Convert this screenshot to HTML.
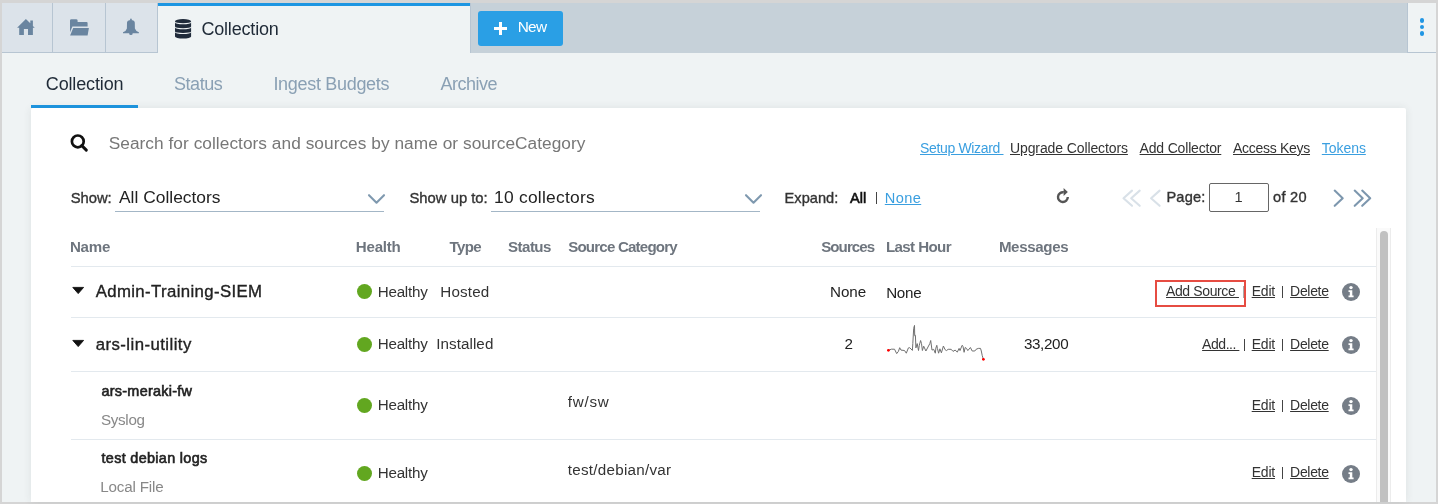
<!DOCTYPE html>
<html><head><meta charset="utf-8"><title>Collection</title>
<style>
html,body{margin:0;padding:0;}
body{width:1438px;height:504px;position:relative;overflow:hidden;background:#d5d5d5;font-family:"Liberation Sans", sans-serif;}
.t{position:absolute;white-space:pre;line-height:1;}
svg{display:block}
</style></head><body>
<div style="position:absolute;left:2px;top:3px;width:1434px;height:50px;background:#c6d1d9"></div>
<div style="position:absolute;left:2px;top:3px;width:155px;height:49px;background:#dce3ea"></div>
<div style="position:absolute;left:52px;top:3px;width:1px;height:49px;background:#b7c5d2"></div>
<div style="position:absolute;left:105px;top:3px;width:1px;height:49px;background:#b7c5d2"></div>
<div style="position:absolute;left:157px;top:3px;width:1px;height:50px;background:#b7c5d2"></div>
<div style="position:absolute;left:2px;top:52px;width:156px;height:1px;background:#b7c5d2"></div>
<div style="position:absolute;left:158px;top:3px;width:312px;height:50px;background:#eff3f4"></div>
<div style="position:absolute;left:158px;top:3px;width:312px;height:3px;background:#1d96e2"></div>
<div style="position:absolute;left:470px;top:3px;width:1px;height:50px;background:#b7c5d2"></div>
<div style="position:absolute;left:1407px;top:3px;width:29px;height:49px;background:#eff3f4"></div>
<div style="position:absolute;left:1407px;top:3px;width:1px;height:50px;background:#b7c5d2"></div>
<div style="position:absolute;left:1408px;top:52px;width:28px;height:1px;background:#b7c5d2"></div>
<div style="position:absolute;left:1419.6px;top:18.1px;width:4.8px;height:4.8px;border-radius:50%;background:#2196e3"></div>
<div style="position:absolute;left:1419.6px;top:24.6px;width:4.8px;height:4.8px;border-radius:50%;background:#2196e3"></div>
<div style="position:absolute;left:1419.6px;top:31.1px;width:4.8px;height:4.8px;border-radius:50%;background:#2196e3"></div>
<svg style="position:absolute;left:17px;top:18px" width="18" height="18" viewBox="0 0 18 18"><path fill="#6a85a0" d="M8.9 0.9 L13.3 5.3 L13.3 2.4 L15.9 2.4 L15.9 7.9 L17.8 9.7 L15.9 9.7 L15.9 16.9 L11 16.9 L11 10.9 L6.9 10.9 L6.9 16.9 L2.2 16.9 L2.2 9.7 L0.1 9.7 Z"/></svg>
<svg style="position:absolute;left:70px;top:19px" width="19" height="17" viewBox="0 0 19 17"><path fill="#6a85a0" d="M0 1.6 Q0 0.2 1.4 0.2 L6.2 0.2 Q7.5 0.2 7.6 1.4 L7.6 3 L16.6 3 Q17.6 3 17.6 4 L17.6 7.4 L2.4 7.4 L0 13.2 Z M3.2 8.9 L18.9 8.9 L17.6 16.4 L0.1 16.4 Z"/></svg>
<svg style="position:absolute;left:123px;top:18px" width="16" height="18" viewBox="0 0 16 18"><path fill="#6a85a0" d="M4 4.5 Q4.2 2.6 6.2 2.3 L9.6 2.3 Q11.6 2.6 11.8 4.5 L11.9 10.5 Q12.5 12.8 15.9 14.3 L15.9 15.3 L0 15.3 L0 14.3 Q3.4 12.8 3.9 10.5 Z M7.1 2.6 L7.1 1.2 Q7.1 0.4 7.95 0.4 Q8.8 0.4 8.8 1.2 L8.8 2.6 Z M6.1 15.2 L9.7 15.2 Q9.7 17.1 7.9 17.1 Q6.1 17.1 6.1 15.2 Z"/></svg>
<svg style="position:absolute;left:175px;top:19px" width="17" height="20" viewBox="0 0 17 20"><g fill="#1f2a3a"><path d="M0 2.2 A8.05 2.2 0 0 1 16.1 2.2 L16.1 2.6 A8.05 1.7 0 0 1 0 2.6 Z"/><path d="M0 3.5 A8.05 1.7 0 0 0 16.1 3.5 L16.1 7.6 A8.05 1.7 0 0 1 0 7.6 Z"/><path d="M0 8.5 A8.05 1.7 0 0 0 16.1 8.5 L16.1 12.4 A8.05 1.7 0 0 1 0 12.4 Z"/><path d="M0 13.2 A8.05 1.7 0 0 0 16.1 13.2 L16.1 17.6 A8.05 2 0 0 1 0 17.6 Z"/></g></svg>
<div style="position:absolute;left:478px;top:11px;width:85px;height:35px;background:#2a9fe5;border-radius:3px"></div>
<div style="position:absolute;left:494px;top:27.3px;width:13px;height:2.6px;background:#fff"></div>
<div style="position:absolute;left:499.2px;top:22px;width:2.6px;height:13px;background:#fff"></div>
<div style="position:absolute;left:2px;top:53px;width:1434px;height:449px;background:#eff3f4"></div>
<div style="position:absolute;left:31px;top:105px;width:107px;height:3px;background:#1d96e2"></div>
<div style="position:absolute;left:31px;top:108px;width:1375px;height:394px;background:#fff;box-shadow:0 0 8px rgba(40,50,60,0.09);border-radius:2px 2px 0 0"></div>
<svg style="position:absolute;left:70px;top:134px" width="18" height="18" viewBox="0 0 18 18"><circle cx="7.8" cy="7.4" r="5.9" fill="none" stroke="#111" stroke-width="2.7"/><path d="M11.8 11.6 L16.3 16.1" stroke="#111" stroke-width="2.9" stroke-linecap="round"/></svg>
<div style="position:absolute;left:115px;top:211px;width:269px;height:1px;background:#a3b6c6"></div>
<svg style="position:absolute;left:367px;top:193px" width="19" height="12" viewBox="0 0 19 12"><path d="M2 2.2 L9.5 9.7 L17 2.2" fill="none" stroke="#7f99af" stroke-width="2.1" stroke-linecap="round" stroke-linejoin="round"/></svg>
<div style="position:absolute;left:491px;top:211px;width:269px;height:1px;background:#a3b6c6"></div>
<svg style="position:absolute;left:743.5px;top:193px" width="19" height="12" viewBox="0 0 19 12"><path d="M2 2.2 L9.5 9.7 L17 2.2" fill="none" stroke="#7f99af" stroke-width="2.1" stroke-linecap="round" stroke-linejoin="round"/></svg>
<div style="position:absolute;left:876px;top:192px;width:1px;height:12px;background:#444"></div>
<svg style="position:absolute;left:1056px;top:188px" width="15" height="16" viewBox="0 0 15 16"><path d="M11.8 9.1 A4.9 4.9 0 1 1 7.75 4.27" fill="none" stroke="#555" stroke-width="2.4"/><path d="M7.6 0.1 L11.8 4.1 L7.6 8 Z" fill="#555"/></svg>
<svg style="position:absolute;left:1118px;top:184px" width="48" height="28" viewBox="0 0 48 28"><g fill="none" stroke="#d9e1e8" stroke-width="2.1" stroke-linecap="round" stroke-linejoin="round"><path d="M14 6.6 L5.5 14.2 L14 21.8"/><path d="M21.7 6.6 L13.2 14.2 L21.7 21.8"/><path d="M41.6 6.6 L33.1 14.2 L41.6 21.8"/></g></svg>
<div style="position:absolute;left:1209px;top:183px;width:60px;height:29px;box-sizing:border-box;border:1px solid #666;border-radius:2px;background:#fff"></div>
<svg style="position:absolute;left:1328px;top:184px" width="48" height="28" viewBox="0 0 48 28"><g fill="none" stroke="#7d97ae" stroke-width="2.1" stroke-linecap="round" stroke-linejoin="round"><path d="M6.7 6.6 L14.7 14.2 L6.7 21.8"/><path d="M26.7 6.6 L34.7 14.2 L26.7 21.8"/><path d="M34.2 6.6 L42.2 14.2 L34.2 21.8"/></g></svg>
<div style="position:absolute;left:71px;top:266px;width:1305px;height:1px;background:#e3e9ee"></div>
<div style="position:absolute;left:71px;top:317px;width:1305px;height:1px;background:#e3e9ee"></div>
<div style="position:absolute;left:71px;top:371px;width:1305px;height:1px;background:#e3e9ee"></div>
<div style="position:absolute;left:71px;top:439px;width:1305px;height:1px;background:#e3e9ee"></div>
<div style="position:absolute;left:1376px;top:228px;width:15px;height:274px;box-sizing:border-box;border-left:1px solid #ececec;border-right:1px solid #ececec;background:#fafafa"></div>
<div style="position:absolute;left:1380px;top:231px;width:8px;height:271px;background:#c1c1c1;border-radius:4px 4px 0 0"></div>
<svg style="position:absolute;left:72px;top:286px" width="13" height="9" viewBox="0 0 13 9"><path d="M0.8 1.4 L11.6 1.4 L6.2 7.6 Z" fill="#111" stroke="#111" stroke-width="0.9" stroke-linejoin="round"/></svg>
<div style="position:absolute;left:357px;top:284.0px;width:15px;height:15px;border-radius:50%;background:#62a720"></div>
<div style="position:absolute;left:1155px;top:280px;width:91px;height:27px;box-sizing:border-box;border:2px solid #e64c42"></div>
<div style="position:absolute;left:1243px;top:286px;width:1px;height:12px;background:#aaa"></div>
<div style="position:absolute;left:1282px;top:286px;width:1px;height:12px;background:#444"></div>
<svg style="position:absolute;left:1342px;top:283px" width="18" height="18" viewBox="0 0 18 18"><circle cx="9" cy="9" r="9" fill="#757d87"/><circle cx="9" cy="4.6" r="1.7" fill="#fff"/><path d="M6.5 7.3 L10.3 7.3 L10.3 12.5 L11.6 12.5 L11.6 14.2 L6.5 14.2 L6.5 12.5 L7.8 12.5 L7.8 9 L6.5 9 Z" fill="#fff"/></svg>
<svg style="position:absolute;left:72px;top:339px" width="13" height="9" viewBox="0 0 13 9"><path d="M0.8 1.4 L11.6 1.4 L6.2 7.6 Z" fill="#111" stroke="#111" stroke-width="0.9" stroke-linejoin="round"/></svg>
<div style="position:absolute;left:357px;top:336.5px;width:15px;height:15px;border-radius:50%;background:#62a720"></div>
<div style="position:absolute;left:1244px;top:339px;width:1px;height:12px;background:#444"></div>
<div style="position:absolute;left:1282px;top:339px;width:1px;height:12px;background:#444"></div>
<svg style="position:absolute;left:1342px;top:336px" width="18" height="18" viewBox="0 0 18 18"><circle cx="9" cy="9" r="9" fill="#757d87"/><circle cx="9" cy="4.6" r="1.7" fill="#fff"/><path d="M6.5 7.3 L10.3 7.3 L10.3 12.5 L11.6 12.5 L11.6 14.2 L6.5 14.2 L6.5 12.5 L7.8 12.5 L7.8 9 L6.5 9 Z" fill="#fff"/></svg>
<div style="position:absolute;left:357px;top:397.5px;width:15px;height:15px;border-radius:50%;background:#62a720"></div>
<div style="position:absolute;left:1282px;top:400px;width:1px;height:12px;background:#444"></div>
<svg style="position:absolute;left:1342px;top:397px" width="18" height="18" viewBox="0 0 18 18"><circle cx="9" cy="9" r="9" fill="#757d87"/><circle cx="9" cy="4.6" r="1.7" fill="#fff"/><path d="M6.5 7.3 L10.3 7.3 L10.3 12.5 L11.6 12.5 L11.6 14.2 L6.5 14.2 L6.5 12.5 L7.8 12.5 L7.8 9 L6.5 9 Z" fill="#fff"/></svg>
<div style="position:absolute;left:357px;top:465.5px;width:15px;height:15px;border-radius:50%;background:#62a720"></div>
<div style="position:absolute;left:1282px;top:467px;width:1px;height:12px;background:#444"></div>
<svg style="position:absolute;left:1342px;top:464.5px" width="18" height="18" viewBox="0 0 18 18"><circle cx="9" cy="9" r="9" fill="#757d87"/><circle cx="9" cy="4.6" r="1.7" fill="#fff"/><path d="M6.5 7.3 L10.3 7.3 L10.3 12.5 L11.6 12.5 L11.6 14.2 L6.5 14.2 L6.5 12.5 L7.8 12.5 L7.8 9 L6.5 9 Z" fill="#fff"/></svg>
<svg style="position:absolute;left:880px;top:318px" width="110" height="46" viewBox="0 0 110 46"><path d="M8.4 32.3 L11.4 31.2 L14.5 31.2 L16.7 35.6 L18.4 33.4 L19.7 29.7 L21.0 32.1 L24.5 32.5 L26.3 35.2 L28.4 29.9 L29.7 29.7 L32.4 32.4 L32.8 25.6 L33.7 10.3 L34.5 7.4 L34.7 17.7 L35.4 17.3 L35.9 29.9 L37.2 25.6 L38.5 32.5 L39.3 27.3 L40.6 22.5 L41.5 25.6 L42.4 32.5 L43.7 28.2 L45.9 33.0 L49.8 25.6 L50.7 22.5 L52.0 32.1 L53.7 31.3 L55.3 35.2 L55.9 30.0 L56.8 27.3 L57.4 30.4 L58.6 35.2 L59.9 30.8 L61.4 34.8 L63.4 28.0 L65.1 31.7 L66.4 32.6 L68.2 31.3 L71.2 31.3 L73.0 33.4 L75.1 32.1 L77.3 34.1 L79.1 30.4 L80.0 32.6 L82.1 27.3 L83.0 28.2 L84.1 34.3 L85.2 29.5 L86.5 30.4 L87.8 32.6 L90.4 29.5 L92.2 33.0 L94.8 33.0 L96.1 31.3 L98.3 30.4 L100.5 30.4 L101.3 33.0 L102.2 37.4 L103.4 41.3" fill="none" stroke="#707070" stroke-width="1" stroke-linejoin="miter"/><circle cx="8.399999999999977" cy="32.30000000000001" r="1.4" fill="#f00"/><circle cx="103.39999999999998" cy="41.30000000000001" r="1.4" fill="#f00"/></svg>
<div style="position:absolute;left:0;top:0;width:1438px;height:504px;will-change:transform">
<div class="t" style="left:201.40px;top:20.00px;font-size:18px;font-weight:400;color:#1f2a37;letter-spacing:-0.181px;">Collection</div>
<div class="t" style="left:517.80px;top:19.00px;font-size:15.4px;font-weight:400;color:#fff;letter-spacing:-0.787px;">New</div>
<div class="t" style="left:45.80px;top:75.00px;font-size:18px;font-weight:400;color:#1f2a37;letter-spacing:-0.148px;">Collection</div>
<div class="t" style="left:173.90px;top:75.00px;font-size:18px;font-weight:400;color:#8aa0b4;letter-spacing:-0.426px;">Status</div>
<div class="t" style="left:273.40px;top:75.00px;font-size:18px;font-weight:400;color:#8aa0b4;letter-spacing:-0.307px;">Ingest Budgets</div>
<div class="t" style="left:440.60px;top:75.00px;font-size:18px;font-weight:400;color:#8aa0b4;letter-spacing:-0.502px;">Archive</div>
<div class="t" style="left:108.70px;top:135.00px;font-size:17.3px;font-weight:400;color:#777;letter-spacing:0.039px;">Search for collectors and sources by name or sourceCategory</div>
<div class="t" style="left:920.00px;top:141.00px;font-size:14px;font-weight:400;color:#3a9fe0;letter-spacing:-0.341px;text-decoration:underline">Setup Wizard&nbsp;</div>
<div class="t" style="left:1010.00px;top:141.00px;font-size:14px;font-weight:400;color:#333;letter-spacing:-0.108px;text-decoration:underline">Upgrade Collectors</div>
<div class="t" style="left:1139.60px;top:141.00px;font-size:14px;font-weight:400;color:#333;letter-spacing:-0.182px;text-decoration:underline">Add Collector</div>
<div class="t" style="left:1233.00px;top:141.00px;font-size:14px;font-weight:400;color:#333;letter-spacing:-0.284px;text-decoration:underline">Access Keys</div>
<div class="t" style="left:1321.80px;top:141.00px;font-size:14px;font-weight:400;color:#3a9fe0;letter-spacing:-0.052px;text-decoration:underline">Tokens</div>
<div class="t" style="left:70.77px;top:191.00px;font-size:14.8px;font-weight:400;color:#333;letter-spacing:-0.041px;-webkit-text-stroke:0.35px currentColor;">Show:</div>
<div class="t" style="left:119.00px;top:189.00px;font-size:17.4px;font-weight:400;color:#222;letter-spacing:0.002px;">All Collectors</div>
<div class="t" style="left:409.48px;top:191.00px;font-size:14.8px;font-weight:400;color:#333;letter-spacing:0.011px;-webkit-text-stroke:0.35px currentColor;">Show up to:</div>
<div class="t" style="left:494.00px;top:189.00px;font-size:17.4px;font-weight:400;color:#222;letter-spacing:0.256px;">10 collectors</div>
<div class="t" style="left:784.57px;top:191.00px;font-size:14.6px;font-weight:400;color:#333;letter-spacing:0.026px;-webkit-text-stroke:0.35px currentColor;">Expand:</div>
<div class="t" style="left:850.10px;top:191.00px;font-size:14.6px;font-weight:400;color:#111;letter-spacing:-0.038px;-webkit-text-stroke:0.6px currentColor;">All</div>
<div class="t" style="left:884.80px;top:191.00px;font-size:14.6px;font-weight:400;color:#3a9fe0;letter-spacing:0.376px;text-decoration:underline">None</div>
<div class="t" style="left:1166.47px;top:190.00px;font-size:14.6px;font-weight:400;color:#333;letter-spacing:0.167px;-webkit-text-stroke:0.35px currentColor;">Page:</div>
<div class="t" style="left:1234.50px;top:190.00px;font-size:14.6px;font-weight:400;color:#333;letter-spacing:0.000px;">1</div>
<div class="t" style="left:1273.08px;top:190.00px;font-size:14.6px;font-weight:400;color:#333;letter-spacing:0.252px;-webkit-text-stroke:0.35px currentColor;">of 20</div>
<div class="t" style="left:69.90px;top:239.00px;font-size:15.1px;font-weight:700;color:#6e757e;letter-spacing:-0.205px;">Name</div>
<div class="t" style="left:355.80px;top:239.00px;font-size:15.1px;font-weight:700;color:#6e757e;letter-spacing:-0.222px;">Health</div>
<div class="t" style="left:449.60px;top:239.00px;font-size:15.1px;font-weight:700;color:#6e757e;letter-spacing:-0.671px;">Type</div>
<div class="t" style="left:508.10px;top:239.00px;font-size:15.1px;font-weight:700;color:#6e757e;letter-spacing:-0.567px;">Status</div>
<div class="t" style="left:568.20px;top:239.00px;font-size:15.1px;font-weight:700;color:#6e757e;letter-spacing:-0.807px;">Source Category</div>
<div class="t" style="left:821.20px;top:239.00px;font-size:15.1px;font-weight:700;color:#6e757e;letter-spacing:-0.928px;">Sources</div>
<div class="t" style="left:885.90px;top:239.00px;font-size:15.1px;font-weight:700;color:#6e757e;letter-spacing:-0.596px;">Last Hour</div>
<div class="t" style="left:998.90px;top:239.00px;font-size:15.1px;font-weight:700;color:#6e757e;letter-spacing:-0.352px;">Messages</div>
<div class="t" style="left:95.67px;top:284.00px;font-size:16.8px;font-weight:400;color:#222;letter-spacing:0.370px;-webkit-text-stroke:0.35px currentColor;">Admin-Training-SIEM</div>
<div class="t" style="left:377.70px;top:284.00px;font-size:15.2px;font-weight:400;color:#333;letter-spacing:-0.234px;">Healthy</div>
<div class="t" style="left:440.30px;top:284.00px;font-size:15.2px;font-weight:400;color:#333;letter-spacing:0.165px;">Hosted</div>
<div class="t" style="left:830.00px;top:284.00px;font-size:15.2px;font-weight:400;color:#222;letter-spacing:-0.020px;">None</div>
<div class="t" style="left:886.20px;top:285.00px;font-size:15.2px;font-weight:400;color:#222;letter-spacing:-0.287px;">None</div>
<div class="t" style="left:1166.00px;top:284.00px;font-size:14px;font-weight:400;color:#333;letter-spacing:-0.375px;text-decoration:underline">Add Source&nbsp;</div>
<div class="t" style="left:1251.70px;top:284.00px;font-size:14px;font-weight:400;color:#333;letter-spacing:-0.211px;text-decoration:underline">Edit</div>
<div class="t" style="left:1290.10px;top:284.00px;font-size:14px;font-weight:400;color:#333;letter-spacing:-0.317px;text-decoration:underline">Delete</div>
<div class="t" style="left:95.67px;top:337.00px;font-size:16.8px;font-weight:400;color:#222;letter-spacing:0.438px;-webkit-text-stroke:0.35px currentColor;">ars-lin-utility</div>
<div class="t" style="left:377.70px;top:336.00px;font-size:15.2px;font-weight:400;color:#333;letter-spacing:-0.234px;">Healthy</div>
<div class="t" style="left:436.20px;top:336.00px;font-size:15.2px;font-weight:400;color:#333;letter-spacing:0.072px;">Installed</div>
<div class="t" style="left:844.40px;top:336.00px;font-size:15.2px;font-weight:400;color:#222;letter-spacing:0.000px;">2</div>
<div class="t" style="left:1023.90px;top:336.00px;font-size:15.2px;font-weight:400;color:#222;letter-spacing:-0.341px;">33,200</div>
<div class="t" style="left:1202.10px;top:337.00px;font-size:14px;font-weight:400;color:#333;letter-spacing:-0.458px;text-decoration:underline">Add...&nbsp;</div>
<div class="t" style="left:1251.70px;top:337.00px;font-size:14px;font-weight:400;color:#333;letter-spacing:-0.211px;text-decoration:underline">Edit</div>
<div class="t" style="left:1290.10px;top:337.00px;font-size:14px;font-weight:400;color:#333;letter-spacing:-0.317px;text-decoration:underline">Delete</div>
<div class="t" style="left:101.50px;top:384.00px;font-size:14.4px;font-weight:400;color:#222;letter-spacing:0.271px;-webkit-text-stroke:0.6px currentColor;">ars-meraki-fw</div>
<div class="t" style="left:101.00px;top:412.00px;font-size:15.2px;font-weight:400;color:#888;letter-spacing:-0.328px;">Syslog</div>
<div class="t" style="left:377.70px;top:397.00px;font-size:15.2px;font-weight:400;color:#333;letter-spacing:-0.234px;">Healthy</div>
<div class="t" style="left:567.80px;top:394.00px;font-size:15.2px;font-weight:400;color:#333;letter-spacing:0.725px;">fw/sw</div>
<div class="t" style="left:1251.70px;top:398.00px;font-size:14px;font-weight:400;color:#333;letter-spacing:-0.211px;text-decoration:underline">Edit</div>
<div class="t" style="left:1290.10px;top:398.00px;font-size:14px;font-weight:400;color:#333;letter-spacing:-0.317px;text-decoration:underline">Delete</div>
<div class="t" style="left:101.50px;top:451.00px;font-size:14.4px;font-weight:400;color:#222;letter-spacing:0.326px;-webkit-text-stroke:0.6px currentColor;">test debian logs</div>
<div class="t" style="left:100.20px;top:479.00px;font-size:15.2px;font-weight:400;color:#888;letter-spacing:-0.161px;">Local File</div>
<div class="t" style="left:377.70px;top:465.00px;font-size:15.2px;font-weight:400;color:#333;letter-spacing:-0.234px;">Healthy</div>
<div class="t" style="left:567.80px;top:462.00px;font-size:15.2px;font-weight:400;color:#333;letter-spacing:0.260px;">test/debian/var</div>
<div class="t" style="left:1251.70px;top:465.00px;font-size:14px;font-weight:400;color:#333;letter-spacing:-0.211px;text-decoration:underline">Edit</div>
<div class="t" style="left:1290.10px;top:465.00px;font-size:14px;font-weight:400;color:#333;letter-spacing:-0.317px;text-decoration:underline">Delete</div>
</div>
</body></html>
